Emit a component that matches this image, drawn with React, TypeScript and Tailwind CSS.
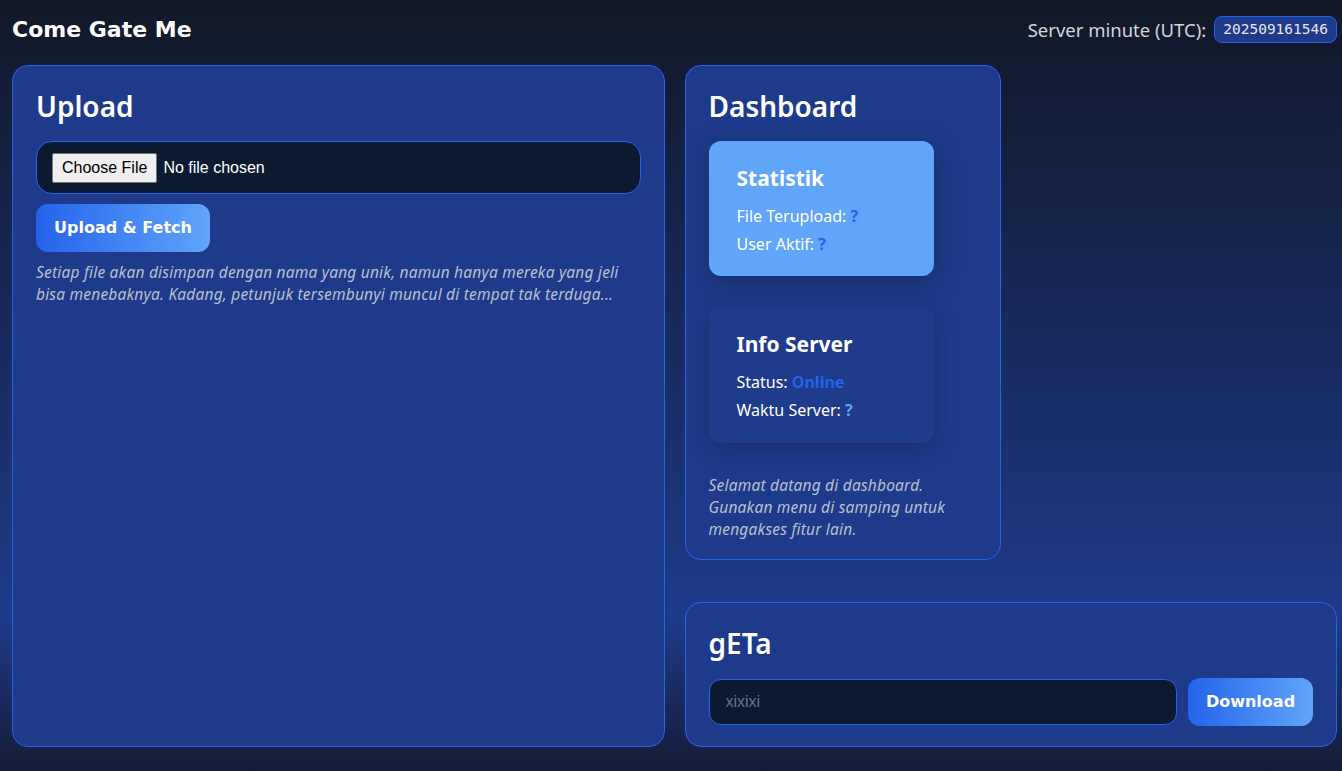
const sans = "font-['Noto_Sans','Open_Sans',sans-serif]";
const wide = "font-['DejaVu_Sans','Verdana',sans-serif]";

export default function App() {
  return (
    <div
      className={`min-h-screen bg-[linear-gradient(180deg,#111827_0%,#1e3a8a_80%,#151c36_100%)] pl-3 pr-[5px] text-white ${sans}`}
    >
      <header className="flex h-[59px] items-center justify-between">
        <h1 className={`text-[22px] font-bold ${wide}`}>Come Gate Me</h1>
        <div className="flex items-center gap-2">
          <span className="text-[18.5px] text-[#d1d5db]">Server minute (UTC):</span>
          <code className="rounded-lg border border-[#2563eb] bg-[#1e3a8a] px-2 py-[2px] font-['DejaVu_Sans_Mono',monospace] text-[14.5px] text-[#e5e7eb]">
            202509161546
          </code>
        </div>
      </header>

      <main className="mt-[6px] grid grid-cols-4 gap-x-5 gap-y-[42px]">
        <section className="col-span-2 row-span-2 rounded-2xl border border-[#2563eb] bg-[#1e3a8a] px-[23px] pt-[23px]">
          <h2 className="mb-[18px] text-[28px] font-semibold leading-[34px]">Upload</h2>
          <div className="flex h-[53px] items-center rounded-2xl border border-[#2563eb] bg-[#0b1a30] px-[15px]">
            <input
              type="file"
              className="font-['Liberation_Sans',Arial,sans-serif] text-[16px] text-white file:mr-[6px] file:rounded-[2px] file:border file:border-solid file:border-[#767676] file:bg-[#efefef] file:px-[9px] file:py-[2px] file:text-black"
            />
          </div>
          <button
            className={`mt-[10px] h-12 rounded-xl bg-[linear-gradient(90deg,#2563eb,#60a5fa)] px-[18px] text-[16px] font-bold text-white ${wide}`}
          >
            Upload &amp; Fetch
          </button>
          <p className="mt-[9px] text-[15.5px] italic leading-[22px] tracking-[0.2px] text-[#b8c0d0]">
            Setiap file akan disimpan dengan nama yang unik, namun hanya mereka yang jeli bisa
            menebaknya. Kadang, petunjuk tersembunyi muncul di tempat tak terduga...
          </p>
        </section>

        <section className="col-start-3 rounded-2xl border border-[#2563eb] bg-[#1e3a8a] px-[23px] pb-[19px] pt-[23px]">
          <h2 className="mb-[18px] text-[28px] font-semibold leading-[34px]">Dashboard</h2>
          <div className="w-[225px] rounded-xl bg-[#60a5fa] px-7 pb-[18px] pt-[22px] shadow-[0_8px_24px_rgba(15,23,42,0.35)]">
            <h3 className="mb-[9px] text-[21px] font-bold leading-[30px]">Statistik</h3>
            <p className="text-[16px] leading-7">
              File Terupload: <span className="font-bold text-[#2563eb]">?</span>
            </p>
            <p className="text-[16px] leading-7">
              User Aktif: <span className="font-bold text-[#2563eb]">?</span>
            </p>
          </div>
          <div className="mt-[31px] w-[225px] rounded-xl bg-[#1f3b8b] px-7 pb-[19px] pt-[22px] shadow-[0_6px_20px_rgba(15,23,42,0.3)]">
            <h3 className="mb-[9px] text-[21px] font-bold leading-[30px]">Info Server</h3>
            <p className="text-[16px] leading-7">
              Status: <span className="font-bold text-[#2563eb]">Online</span>
            </p>
            <p className="text-[16px] leading-7">
              Waktu Server: <span className="font-bold text-[#60a5fa]">?</span>
            </p>
          </div>
          <p className="mt-[31px] text-[15.5px] italic leading-[22px] tracking-[0.2px] text-[#b8c0d0]">
            Selamat datang di dashboard. Gunakan menu di samping untuk mengakses fitur lain.
          </p>
        </section>

        <section className="col-span-2 col-start-3 rounded-2xl border border-[#2563eb] bg-[#1e3a8a] px-[23px] pb-5 pt-[23px]">
          <h2 className="mb-[18px] text-[28px] font-semibold leading-[34px]">gETa</h2>
          <div className="flex items-center gap-[11px]">
            <input
              placeholder="xixixi"
              className="h-[46px] flex-1 rounded-xl border border-[#2563eb] bg-[#0b1a30] px-4 font-['Liberation_Sans',Arial,sans-serif] text-[16px] text-white outline-none placeholder:text-[#6b7280]"
            />
            <button
              className={`h-12 w-[125px] rounded-xl bg-[linear-gradient(90deg,#2563eb,#60a5fa)] text-[16px] font-bold text-white ${wide}`}
            >
              Download
            </button>
          </div>
        </section>
      </main>
    </div>
  );
}
